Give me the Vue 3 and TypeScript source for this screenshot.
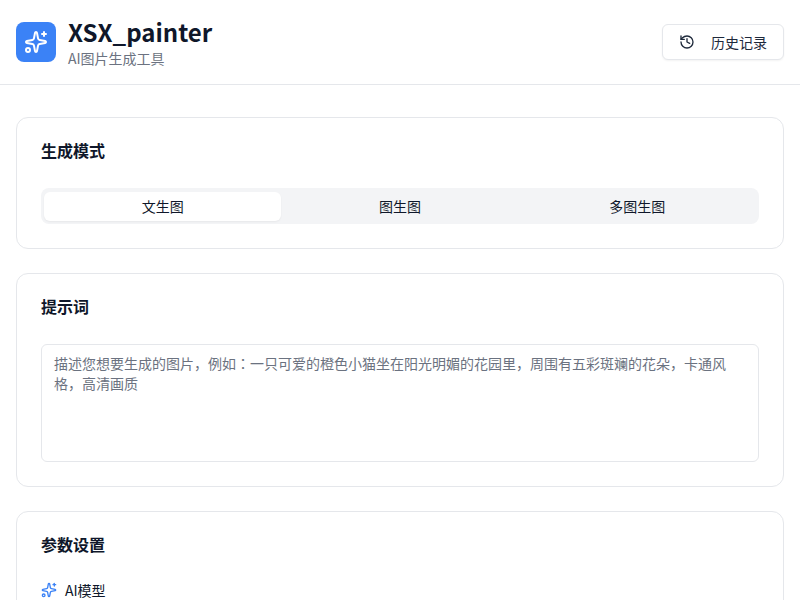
<template>
  <div class="app-page">
    <header class="app-header">
      <div class="brand">
        <div class="brand-icon">
          <svg class="icon-lg" viewBox="0 0 24 24" fill="none" stroke="currentColor" stroke-width="2" stroke-linecap="round" stroke-linejoin="round">
            <path :d="sparklePath" />
            <path d="M20 2v4" />
            <path d="M22 4h-4" />
            <circle cx="4" cy="20" r="2" />
          </svg>
        </div>
        <div class="brand-text">
          <h1>XSX_painter</h1>
          <p>AI图片生成工具</p>
        </div>
      </div>
      <button class="history-button" type="button">
        <svg class="icon-sm" viewBox="0 0 24 24" fill="none" stroke="currentColor" stroke-width="2" stroke-linecap="round" stroke-linejoin="round">
          <path d="M3 12a9 9 0 1 0 9-9 9.75 9.75 0 0 0-6.74 2.74L3 8" />
          <path d="M3 3v5h5" />
          <path d="M12 7v5l4 2" />
        </svg>
        历史记录
      </button>
    </header>

    <main class="content">
      <section class="card">
        <h2>生成模式</h2>
        <div class="tabs">
          <button
            v-for="tab in tabs"
            :key="tab"
            type="button"
            class="tab"
            :class="{ active: tab === activeTab }"
            @click="activeTab = tab"
          >
            {{ tab }}
          </button>
        </div>
      </section>

      <section class="card">
        <h2>提示词</h2>
        <textarea
          v-model="prompt"
          class="prompt"
          placeholder="描述您想要生成的图片，例如：一只可爱的橙色小猫坐在阳光明媚的花园里，周围有五彩斑斓的花朵，卡通风格，高清画质"
        ></textarea>
      </section>

      <section class="card">
        <h2 class="params-title">参数设置</h2>
        <div class="field-label">
          <svg class="icon-field" viewBox="0 0 24 24" fill="none" stroke="currentColor" stroke-width="2" stroke-linecap="round" stroke-linejoin="round">
            <path :d="sparklePath" />
            <path d="M20 2v4" />
            <path d="M22 4h-4" />
            <circle cx="4" cy="20" r="2" />
          </svg>
          AI模型
        </div>
      </section>
    </main>
  </div>
</template>

<script setup lang="ts">
import { ref } from 'vue'

const sparklePath =
  'M11.017 2.814a1 1 0 0 1 1.966 0l1.051 5.558a2 2 0 0 0 1.594 1.594l5.558 1.051a1 1 0 0 1 0 1.966l-5.558 1.051a2 2 0 0 0-1.594 1.594l-1.051 5.558a1 1 0 0 1-1.966 0l-1.051-5.558a2 2 0 0 0-1.594-1.594l-5.558-1.051a1 1 0 0 1 0-1.966l5.558-1.051a2 2 0 0 0 1.594-1.594z'

const tabs = ['文生图', '图生图', '多图生图']
const activeTab = ref('文生图')
const prompt = ref('')
</script>

<style>
html,
body {
  margin: 0;
  overflow: hidden;
  background: #ffffff;
}
</style>

<style scoped>
.app-page {
  min-height: 100vh;
  background: #ffffff;
  color: #0f172a;
  font-family: "Noto Sans CJK JP", "Noto Sans", sans-serif;
}

.app-header {
  display: flex;
  align-items: center;
  justify-content: space-between;
  box-sizing: border-box;
  height: 85px;
  padding: 0 16px;
  border-bottom: 1px solid #e5e7eb;
}

.brand {
  display: flex;
  align-items: center;
  gap: 12px;
}

.brand-icon {
  display: flex;
  align-items: center;
  justify-content: center;
  width: 40px;
  height: 40px;
  border-radius: 8px;
  background: #3b82f6;
  color: #ffffff;
}

.icon-lg {
  width: 24px;
  height: 24px;
}

.brand-text h1 {
  margin: 0;
  font-size: 24px;
  line-height: 32px;
  font-weight: 700;
  color: #0f172a;
}

.brand-text p {
  margin: 0;
  font-size: 14px;
  line-height: 20px;
  color: #6b7280;
}

.history-button {
  display: flex;
  align-items: center;
  gap: 16px;
  box-sizing: border-box;
  height: 36px;
  padding: 0 16px;
  border: 1px solid #e5e7eb;
  border-radius: 6px;
  background: #ffffff;
  box-shadow: 0 1px 2px rgba(0, 0, 0, 0.05);
  color: #1e293b;
  font-family: inherit;
  font-size: 14px;
  font-weight: 400;
}

.icon-sm {
  width: 16px;
  height: 16px;
}

.content {
  display: flex;
  flex-direction: column;
  gap: 24px;
  padding: 32px 16px;
}

.card {
  padding: 24px;
  border: 1px solid #e5e7eb;
  border-radius: 12px;
  background: #ffffff;
}

.card h2 {
  margin: 0 0 30px;
  font-size: 16px;
  line-height: 16px;
  font-weight: 700;
  color: #0f172a;
}

.card h2.params-title {
  margin-bottom: 28px;
}

.tabs {
  display: grid;
  grid-template-columns: repeat(3, 1fr);
  box-sizing: border-box;
  height: 36px;
  padding: 4px 3px 3px;
  border-radius: 8px;
  background: #f3f4f6;
}

.tab {
  padding: 0 0 2px;
  border: none;
  border-radius: 6px;
  background: transparent;
  color: #0f172a;
  font-family: inherit;
  font-size: 14px;
  font-weight: 400;
}

.tab.active {
  background: #ffffff;
  box-shadow: 0 1px 2px rgba(0, 0, 0, 0.05);
}

.prompt {
  display: block;
  box-sizing: border-box;
  width: 100%;
  height: 118px;
  padding: 8px 12px;
  border: 1px solid #e5e7eb;
  border-radius: 6px;
  background: #ffffff;
  color: #0f172a;
  font-family: inherit;
  font-size: 14px;
  line-height: 20px;
  resize: none;
  outline: none;
}

.prompt::placeholder {
  color: #6b7280;
}

.field-label {
  display: flex;
  align-items: center;
  gap: 8px;
  font-size: 14px;
  line-height: 20px;
  font-weight: 400;
  color: #0f172a;
}

.icon-field {
  width: 16px;
  height: 16px;
  color: #3b82f6;
}
</style>
